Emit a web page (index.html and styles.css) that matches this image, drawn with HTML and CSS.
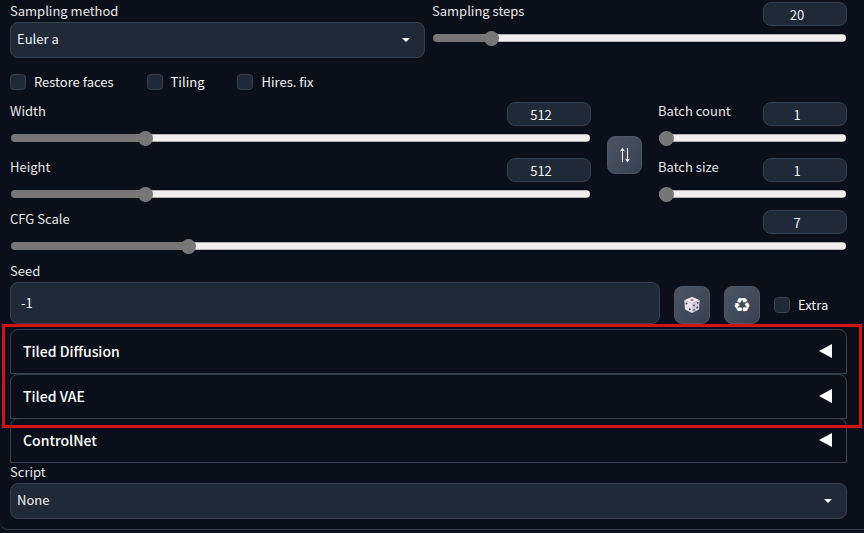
FILE: index.html
```
<!DOCTYPE html>
<html lang="en">
<head>
  <meta charset="UTF-8">
  <meta name="viewport" content="width=device-width, initial-scale=1.0">
  <title>txt2img settings</title>
  <link rel="stylesheet" href="styles.css">
</head>
<body>

<main class="panel">

  <!-- Sampler -->
  <div class="row sampler">
    <div class="field">
      <label for="sampler">Sampling method</label>
      <select id="sampler">
        <option>Euler a</option>
      </select>
    </div>
    <div class="slider">
      <div class="slider-head">
        <label for="steps">Sampling steps</label>
        <input type="number" value="20" aria-label="Sampling steps value">
      </div>
      <input type="range" id="steps" min="1" max="150" value="20" style="--fill: 13%">
    </div>
  </div>

  <div class="row checks">
    <label class="check"><input type="checkbox">Restore faces</label>
    <label class="check"><input type="checkbox">Tiling</label>
    <label class="check"><input type="checkbox">Hires. fix</label>
  </div>

  <!-- Size and batch -->
  <div class="size">
    <div class="stack">
      <div class="slider">
        <div class="slider-head">
          <label for="width">Width</label>
          <input type="number" value="512" aria-label="Width value">
        </div>
        <input type="range" id="width" min="64" max="2048" value="512" style="--fill: 23%">
      </div>
      <div class="slider">
        <div class="slider-head">
          <label for="height">Height</label>
          <input type="number" value="512" aria-label="Height value">
        </div>
        <input type="range" id="height" min="64" max="2048" value="512" style="--fill: 23%">
      </div>
    </div>
    <button class="tool swap" aria-label="Swap width and height">
      <svg width="12" height="16" viewBox="0 0 12 16" fill="#f3f4f6">
        <path d="M3 3h1v12H3zM8 1h1v12H8z"/>
        <path d="M3.500 .5L6 4.500 3.500 3.500 1 4.500zM8.500 15.500L6 11.500l2.500 1 2.500-1z"/>
      </svg>
    </button>
    <div class="stack">
      <div class="slider">
        <div class="slider-head">
          <label for="count">Batch count</label>
          <input type="number" value="1" aria-label="Batch count value">
        </div>
        <input type="range" id="count" min="1" max="100" value="1" style="--fill: 0%">
      </div>
      <div class="slider">
        <div class="slider-head">
          <label for="batch">Batch size</label>
          <input type="number" value="1" aria-label="Batch size value">
        </div>
        <input type="range" id="batch" min="1" max="8" value="1" style="--fill: 0%">
      </div>
    </div>
  </div>

  <div class="slider">
    <div class="slider-head">
      <label for="cfg">CFG Scale</label>
      <input type="number" value="7" aria-label="CFG Scale value">
    </div>
    <input type="range" id="cfg" min="1" max="30" value="7" style="--fill: 21%">
  </div>

  <!-- Seed -->
  <div class="row seed">
    <div class="field">
      <label for="seed">Seed</label>
      <input type="text" id="seed" value="-1">
    </div>
    <button class="tool" aria-label="Random seed">
      <svg width="18" height="18" viewBox="0 0 18 18">
        <path fill="#f6f0f8" d="M9 1l7.500 3L9 7.200 1.500 4z"/>
        <path fill="#e8e1ef" d="M1.300 4L9 7.200V17l-7-3.500z"/>
        <path fill="#d3c9df" d="M16.700 4L9 7.200V17l7-3.500z"/>
        <ellipse cx="9" cy="4" rx="2" ry="1" fill="#d9656b"/>
        <g fill="#453f52">
          <circle cx="3.500" cy="7.500" r="1"/>
          <circle cx="6.800" cy="13.300" r="1"/>
          <circle cx="14.700" cy="6.800" r=".9"/>
          <circle cx="11" cy="9.300" r=".9"/>
          <circle cx="14.200" cy="11.500" r=".9"/>
          <circle cx="11" cy="13.800" r=".9"/>
        </g>
      </svg>
    </button>
    <button class="tool recycle" aria-label="Reuse seed">♻</button>
    <label class="check extra"><input type="checkbox">Extra</label>
  </div>

  <!-- Extensions -->
  <div class="extensions">
    <div class="highlight">
      <button class="accordion">Tiled Diffusion <span class="arrow"></span></button>
      <button class="accordion">Tiled VAE <span class="arrow"></span></button>
    </div>
    <button class="accordion">ControlNet <span class="arrow"></span></button>
  </div>

  <div class="field">
    <label for="script">Script</label>
    <select id="script">
      <option>None</option>
    </select>
  </div>

</main>

</body>
</html>
```
FILE: styles.css
```
* {
  box-sizing: border-box;
}

body {
  margin: 0;
  background-color: #0b0f19;
  color: #f3f4f6;
  font-family: "Noto Sans CJK SC", "Noto Sans", sans-serif;
  font-size: 13px;
  line-height: 18px;
}

input, select, button {
  margin: 0;
  font: inherit;
  color: inherit;
}

.panel {
  padding: 2px 17px 10px 10px;
  border-bottom: 1px solid #374151;
  border-bottom-left-radius: 8px;
}

.row {
  display: flex;
}

.field {
  display: flex;
  flex-direction: column;
  gap: 2px;
}

.field label,
.slider label {
  color: #e5e7eb;
}

select,
input[type="text"],
input[type="number"] {
  background-color: #1f2937;
  border: 1px solid #374151;
  border-radius: 8px;
}

select {
  appearance: none;
  width: 100%;
  height: 36px;
  padding: 0 6px 2px;
  background-image: url("data:image/svg+xml,%3Csvg xmlns='http://www.w3.org/2000/svg' width='8' height='4'%3E%3Cpath d='M0 0h8L4 4z' fill='white'/%3E%3C/svg%3E");
  background-repeat: no-repeat;
  background-position: right 14px center;
}

/* sliders */
.slider {
  display: flex;
  flex-direction: column;
  gap: 8px;
}

.slider-head {
  display: flex;
  justify-content: space-between;
  align-items: flex-start;
}

input[type="number"] {
  appearance: textfield;
  width: 84px;
  height: 24px;
  padding: 0 16px 0 0;
  text-align: center;
}

input[type="number"]::-webkit-inner-spin-button {
  display: none;
}

input[type="range"] {
  appearance: none;
  height: 8px;
  margin: 0 1px;
  border-radius: 4px;
  background:
    linear-gradient(#767676, #767676) 0 0 / var(--fill) 100% no-repeat,
    linear-gradient(#b2b2b2 1px, #efefef 1px, #efefef 7px, #b2b2b2 7px);
}

input[type="range"]::-webkit-slider-thumb {
  appearance: none;
  width: 15px;
  height: 15px;
  border-radius: 50%;
  background-color: #767676;
}

.sampler {
  gap: 7px;
}

.sampler > div {
  flex: 1;
}

/* checkboxes */
.checks {
  gap: 33px;
  margin: 16px 0 12px;
}

.check {
  display: flex;
  align-items: center;
  gap: 8px;
  line-height: 16px;
}

input[type="checkbox"] {
  appearance: none;
  width: 16px;
  height: 16px;
  background-color: #1f2937;
  border: 1px solid #374151;
  border-radius: 4px;
}

/* size */
.size {
  display: grid;
  grid-template-columns: 1fr 35px 189px;
  gap: 16px;
  margin-bottom: 12px;
}

.stack {
  display: flex;
  flex-direction: column;
  gap: 16px;
}

.tool {
  display: flex;
  align-items: center;
  justify-content: center;
  width: 36px;
  height: 38px;
  padding: 0;
  border: 1px solid #4b5563;
  border-radius: 8px;
  background: linear-gradient(to bottom right, #4b5563, #374151);
}

.swap {
  width: auto;
  align-self: center;
  margin-top: 10px;
}

.recycle {
  font-family: "DejaVu Sans", sans-serif;
  font-size: 20px;
  color: #fff;
}

/* seed */
.seed {
  align-items: flex-end;
  gap: 14px;
  margin: 12px 0 5px;
}

.seed .field {
  flex: 1;
}

.seed input[type="text"] {
  width: 100%;
  height: 42px;
  padding: 0 10px 2px;
}

.extra {
  width: 73px;
  height: 38px;
}

/* extensions */
.highlight {
  position: relative;
  margin-bottom: -1px;
}

.highlight::after {
  content: "";
  position: absolute;
  inset: -5px -15px -9px -8px;
  border: 3px solid #d41414;
  pointer-events: none;
  z-index: 1;
}

.accordion {
  display: flex;
  justify-content: space-between;
  align-items: center;
  width: 100%;
  height: 45px;
  padding: 0 14px 2px 12px;
  border: 1px solid #374151;
  border-radius: 8px 8px 0 0;
  background: none;
  color: #fff;
  font-size: 14px;
  font-weight: 500;
  text-align: left;
}

.arrow {
  border: 7px solid transparent;
  border-left-width: 0;
  border-right: 13px solid #fff;
}
```
